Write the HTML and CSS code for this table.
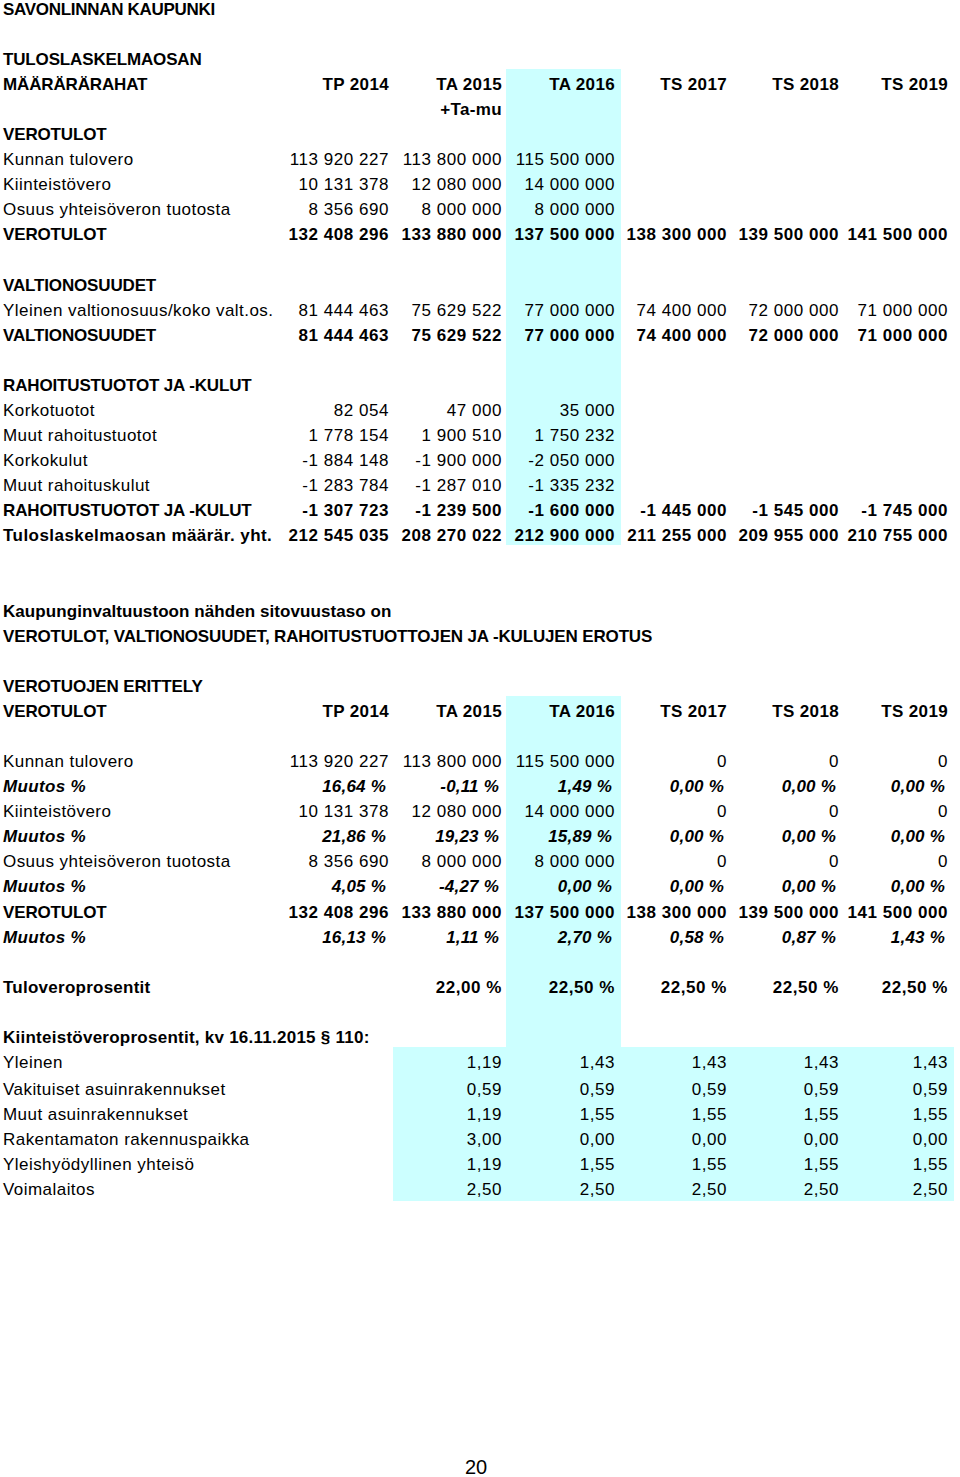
FILE: index.html
```html
<!DOCTYPE html>
<html lang="fi">
<head>
<meta charset="utf-8">
<title>Savonlinnan kaupunki – tuloslaskelmaosan määrärahat</title>
<link rel="stylesheet" href="styles.css">
</head>
<body>
<main class="sheet">
  <div class="row first"><div class="c lbl b title">SAVONLINNAN KAUPUNKI</div></div>
  <div class="row"></div>
  <div class="row"><div class="c lbl b">TULOSLASKELMAOSAN</div></div>
  <div class="row b hdr"><div class="c lbl">MÄÄRÄRÄRAHAT</div><div class="c n1">TP 2014</div><div class="c n2">TA 2015</div><div class="c n3 hl">TA 2016</div><div class="c n4">TS 2017</div><div class="c n5">TS 2018</div><div class="c n6">TS 2019</div></div>
  <div class="row b hdr"><div class="c lbl"></div><div class="c n1"></div><div class="c n2">+Ta-mu</div><div class="c n3 hl"></div></div>
  <div class="row b"><div class="c lbl">VEROTULOT</div><div class="c n1"></div><div class="c n2"></div><div class="c n3 hl"></div></div>
  <div class="row"><div class="c lbl">Kunnan tulovero</div><div class="c n1">113 920 227</div><div class="c n2">113 800 000</div><div class="c n3 hl">115 500 000</div></div>
  <div class="row"><div class="c lbl">Kiinteistövero</div><div class="c n1">10 131 378</div><div class="c n2">12 080 000</div><div class="c n3 hl">14 000 000</div></div>
  <div class="row"><div class="c lbl">Osuus yhteisöveron tuotosta</div><div class="c n1">8 356 690</div><div class="c n2">8 000 000</div><div class="c n3 hl">8 000 000</div></div>
  <div class="row b"><div class="c lbl">VEROTULOT</div><div class="c n1">132 408 296</div><div class="c n2">133 880 000</div><div class="c n3 hl">137 500 000</div><div class="c n4">138 300 000</div><div class="c n5">139 500 000</div><div class="c n6">141 500 000</div></div>
  <div class="row"><div class="c lbl"></div><div class="c n1"></div><div class="c n2"></div><div class="c n3 hl"></div></div>
  <div class="row b"><div class="c lbl">VALTIONOSUUDET</div><div class="c n1"></div><div class="c n2"></div><div class="c n3 hl"></div></div>
  <div class="row"><div class="c lbl">Yleinen valtionosuus/koko valt.os.</div><div class="c n1">81 444 463</div><div class="c n2">75 629 522</div><div class="c n3 hl">77 000 000</div><div class="c n4">74 400 000</div><div class="c n5">72 000 000</div><div class="c n6">71 000 000</div></div>
  <div class="row b"><div class="c lbl">VALTIONOSUUDET</div><div class="c n1">81 444 463</div><div class="c n2">75 629 522</div><div class="c n3 hl">77 000 000</div><div class="c n4">74 400 000</div><div class="c n5">72 000 000</div><div class="c n6">71 000 000</div></div>
  <div class="row"><div class="c lbl"></div><div class="c n1"></div><div class="c n2"></div><div class="c n3 hl"></div></div>
  <div class="row b"><div class="c lbl">RAHOITUSTUOTOT JA -KULUT</div><div class="c n1"></div><div class="c n2"></div><div class="c n3 hl"></div></div>
  <div class="row"><div class="c lbl">Korkotuotot</div><div class="c n1">82 054</div><div class="c n2">47 000</div><div class="c n3 hl">35 000</div></div>
  <div class="row"><div class="c lbl">Muut rahoitustuotot</div><div class="c n1">1 778 154</div><div class="c n2">1 900 510</div><div class="c n3 hl">1 750 232</div></div>
  <div class="row"><div class="c lbl">Korkokulut</div><div class="c n1">-1 884 148</div><div class="c n2">-1 900 000</div><div class="c n3 hl">-2 050 000</div></div>
  <div class="row"><div class="c lbl">Muut rahoituskulut</div><div class="c n1">-1 283 784</div><div class="c n2">-1 287 010</div><div class="c n3 hl">-1 335 232</div></div>
  <div class="row b"><div class="c lbl">RAHOITUSTUOTOT JA -KULUT</div><div class="c n1">-1 307 723</div><div class="c n2">-1 239 500</div><div class="c n3 hl">-1 600 000</div><div class="c n4">-1 445 000</div><div class="c n5">-1 545 000</div><div class="c n6">-1 745 000</div></div>
  <div class="row b"><div class="c lbl wide">Tuloslaskelmaosan määrär. yht.</div><div class="c n1">212 545 035</div><div class="c n2">208 270 022</div><div class="c n3 hl">212 900 000</div><div class="c n4">211 255 000</div><div class="c n5">209 955 000</div><div class="c n6">210 755 000</div></div>
  <div class="row"></div>
  <div class="row"></div>
  <div class="row b"><div class="c lbl note">Kaupunginvaltuustoon nähden sitovuustaso on</div></div>
  <div class="row b"><div class="c lbl">VEROTULOT, VALTIONOSUUDET, RAHOITUSTUOTTOJEN JA -KULUJEN EROTUS</div></div>
  <div class="row"></div>
  <div class="row b"><div class="c lbl">VEROTUOJEN ERITTELY</div></div>
  <div class="row b hdr"><div class="c lbl">VEROTULOT</div><div class="c n1">TP 2014</div><div class="c n2">TA 2015</div><div class="c n3 hl">TA 2016</div><div class="c n4">TS 2017</div><div class="c n5">TS 2018</div><div class="c n6">TS 2019</div></div>
  <div class="row"><div class="c lbl"></div><div class="c n1"></div><div class="c n2"></div><div class="c n3 hl"></div></div>
  <div class="row"><div class="c lbl">Kunnan tulovero</div><div class="c n1">113 920 227</div><div class="c n2">113 800 000</div><div class="c n3 hl">115 500 000</div><div class="c n4">0</div><div class="c n5">0</div><div class="c n6">0</div></div>
  <div class="row muutos"><div class="c lbl">Muutos %</div><div class="c n1">16,64 %</div><div class="c n2">-0,11 %</div><div class="c n3 hl">1,49 %</div><div class="c n4">0,00 %</div><div class="c n5">0,00 %</div><div class="c n6">0,00 %</div></div>
  <div class="row"><div class="c lbl">Kiinteistövero</div><div class="c n1">10 131 378</div><div class="c n2">12 080 000</div><div class="c n3 hl">14 000 000</div><div class="c n4">0</div><div class="c n5">0</div><div class="c n6">0</div></div>
  <div class="row muutos"><div class="c lbl">Muutos %</div><div class="c n1">21,86 %</div><div class="c n2">19,23 %</div><div class="c n3 hl">15,89 %</div><div class="c n4">0,00 %</div><div class="c n5">0,00 %</div><div class="c n6">0,00 %</div></div>
  <div class="row"><div class="c lbl">Osuus yhteisöveron tuotosta</div><div class="c n1">8 356 690</div><div class="c n2">8 000 000</div><div class="c n3 hl">8 000 000</div><div class="c n4">0</div><div class="c n5">0</div><div class="c n6">0</div></div>
  <div class="row muutos"><div class="c lbl">Muutos %</div><div class="c n1">4,05 %</div><div class="c n2">-4,27 %</div><div class="c n3 hl">0,00 %</div><div class="c n4">0,00 %</div><div class="c n5">0,00 %</div><div class="c n6">0,00 %</div></div>
  <div class="row b"><div class="c lbl">VEROTULOT</div><div class="c n1">132 408 296</div><div class="c n2">133 880 000</div><div class="c n3 hl">137 500 000</div><div class="c n4">138 300 000</div><div class="c n5">139 500 000</div><div class="c n6">141 500 000</div></div>
  <div class="row muutos"><div class="c lbl">Muutos %</div><div class="c n1">16,13 %</div><div class="c n2">1,11 %</div><div class="c n3 hl">2,70 %</div><div class="c n4">0,58 %</div><div class="c n5">0,87 %</div><div class="c n6">1,43 %</div></div>
  <div class="row"><div class="c lbl"></div><div class="c n1"></div><div class="c n2"></div><div class="c n3 hl"></div></div>
  <div class="row b"><div class="c lbl mx">Tuloveroprosentit</div><div class="c n1"></div><div class="c n2">22,00 %</div><div class="c n3 hl">22,50 %</div><div class="c n4">22,50 %</div><div class="c n5">22,50 %</div><div class="c n6">22,50 %</div></div>
  <div class="row"><div class="c lbl"></div><div class="c n1"></div><div class="c n2"></div><div class="c n3 hl"></div></div>
  <div class="row b"><div class="c lbl mx">Kiinteistöveroprosentit, kv 16.11.2015 § 110:</div><div class="c n1"></div><div class="c n2"></div><div class="c n3 hl"></div></div>
  <div class="row tall"><div class="c lbl">Yleinen</div><div class="c n1"></div><div class="c n2 hl">1,19</div><div class="c n3 hl">1,43</div><div class="c n4 hl">1,43</div><div class="c n5 hl">1,43</div><div class="c n6 hl">1,43</div></div>
  <div class="row band"><div class="c lbl">Vakituiset asuinrakennukset</div><div class="c n1"></div><div class="c n2 hl">0,59</div><div class="c n3 hl">0,59</div><div class="c n4 hl">0,59</div><div class="c n5 hl">0,59</div><div class="c n6 hl">0,59</div></div>
  <div class="row band"><div class="c lbl">Muut asuinrakennukset</div><div class="c n1"></div><div class="c n2 hl">1,19</div><div class="c n3 hl">1,55</div><div class="c n4 hl">1,55</div><div class="c n5 hl">1,55</div><div class="c n6 hl">1,55</div></div>
  <div class="row band"><div class="c lbl">Rakentamaton rakennuspaikka</div><div class="c n1"></div><div class="c n2 hl">3,00</div><div class="c n3 hl">0,00</div><div class="c n4 hl">0,00</div><div class="c n5 hl">0,00</div><div class="c n6 hl">0,00</div></div>
  <div class="row band"><div class="c lbl">Yleishyödyllinen yhteisö</div><div class="c n1"></div><div class="c n2 hl">1,19</div><div class="c n3 hl">1,55</div><div class="c n4 hl">1,55</div><div class="c n5 hl">1,55</div><div class="c n6 hl">1,55</div></div>
  <div class="row tall"><div class="c lbl">Voimalaitos</div><div class="c n1"></div><div class="c n2 hl">2,50</div><div class="c n3 hl">2,50</div><div class="c n4 hl">2,50</div><div class="c n5 hl">2,50</div><div class="c n6 hl">2,50</div></div>
</main>
<footer class="page-no">20</footer>
</body>
</html>
```

FILE: styles.css
```css
html, body {
  margin: 0;
  padding: 0;
  background: #ffffff;
}

body {
  width: 960px;
  font-family: "Liberation Sans", Arial, sans-serif;
  font-size: 17px;
  color: #000000;
}

.sheet {
  display: flex;
  flex-direction: column;
}

.row {
  display: flex;
  height: 25.08px;
  box-sizing: border-box;
}

.row.first {
  height: 18.84px;
}

.row.first .c {
  padding-top: 0;
}

.row.tall {
  height: 27px;
}

.row.band {
  height: 25px;
}

.c {
  flex: none;
  box-sizing: border-box;
  padding-top: 6px;
  line-height: 20px;
  white-space: nowrap;
  text-align: right;
  letter-spacing: 0.55px;
}

.lbl {
  width: 281px;
  padding-left: 3px;
  text-align: left;
  overflow: visible;
  letter-spacing: 0.45px;
}

.n1 { width: 112px; padding-right: 4px; }
.n2 { width: 113px; padding-right: 4px; }
.n3 { width: 115px; padding-right: 6px; }
.n4 { width: 112px; padding-right: 6px; }
.n5 { width: 112px; padding-right: 6px; }
.n6 { width: 109px; padding-right: 6px; }

.hl {
  background: #ccffff;
}

.b {
  font-weight: bold;
}

.b .lbl,
.lbl.b {
  letter-spacing: -0.15px;
}

.lbl.title {
  letter-spacing: -0.3px;
}

.b .lbl.mx {
  letter-spacing: 0.25px;
}

.b .lbl.note {
  letter-spacing: 0.07px;
}

.b .lbl.wide {
  letter-spacing: 0.45px;
}

.hdr .c {
  letter-spacing: 0.35px;
}

.hdr .lbl {
  letter-spacing: -0.15px;
}

.muutos {
  font-weight: bold;
  font-style: italic;
}

.muutos .c {
  letter-spacing: 0.2px;
}

.muutos .lbl {
  letter-spacing: 0.35px;
}

.muutos .n1,
.muutos .n2 {
  padding-right: 7px;
}

.muutos .n3,
.muutos .n4,
.muutos .n5,
.muutos .n6 {
  padding-right: 9px;
}

.page-no {
  margin-top: 254px;
  width: 952px;
  height: 24px;
  line-height: 24px;
  text-align: center;
  font-size: 20px;
}
```
